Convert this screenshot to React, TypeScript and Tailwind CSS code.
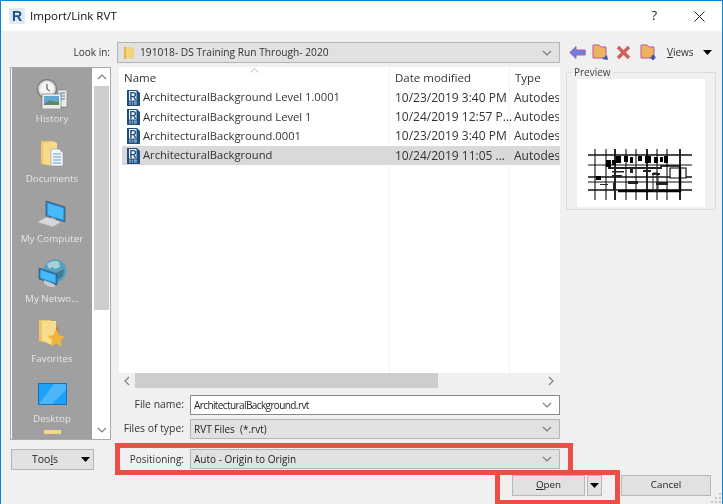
import React from "react";

function Chevron({ className = "" }: { className?: string }) {
  return (
    <svg width="10" height="6" viewBox="0 0 10 6" className={className}>
      <path d="M1 1l4 4 4-4" fill="none" stroke="#7c7c7c" strokeWidth="1.1" />
    </svg>
  );
}

function Caret() {
  return (
    <svg width="9" height="5" viewBox="0 0 9 5">
      <path d="M0 0h9L4.5 5z" fill="#000" />
    </svg>
  );
}

function Combo({ children, white, className = "" }: { children: React.ReactNode; white?: boolean; className?: string }) {
  return (
    <div
      className={`flex h-[20px] items-center justify-between border pl-[3px] pr-[7px] text-[10px] text-[#222] ${
        white ? "border-[#8a8a8a] bg-white" : "border-[#b4b4b4] bg-[#e1e1e1]"
      } ${className}`}
    >
      <span className="truncate">{children}</span>
      <Chevron />
    </div>
  );
}

function RvtIcon() {
  return (
    <svg width="15" height="16" viewBox="0 0 15 16" className="shrink-0">
      <path d="M1 0h10l3 3v13H1z" fill="#1d4f80" />
      <path d="M3 1h7.5v9.5H3z" fill="#f4f7fa" />
      <text x="3.6" y="9.6" fontSize="10" fontWeight="700" fill="#1d4f80" fontFamily="Liberation Sans, sans-serif">R</text>
      <path d="M3.2 12.2h1.6M5.8 12.2h1.4M8.2 12.2h2.6M3.2 14h1.6M5.8 14h1.4M8.2 14h2.6" stroke="#cfe0ef" strokeWidth="1" />
    </svg>
  );
}

function FileRow({ name, date, selected }: { name: string; date: string; selected?: boolean }) {
  return (
    <div className={`ml-[3px] flex h-[19.3px] items-center text-[12px] text-[#333] ${selected ? "bg-[#d9d9d9]" : ""}`}>
      <div className="flex w-[267px] items-center gap-[2px] pl-[4px]">
        <RvtIcon />
        <span className="whitespace-nowrap text-[11.2px]">{name}</span>
      </div>
      <div className="w-[120px] whitespace-nowrap pl-[6px]">{date}</div>
      <div className="w-[50px] overflow-hidden pl-[5px]">Autodes</div>
    </div>
  );
}

function HistoryIcon() {
  return (
    <svg width="32" height="30" viewBox="0 0 32 30">
      <circle cx="11" cy="10" r="9.5" fill="#d8dcd8" stroke="#77807f" strokeWidth="1.4" />
      <circle cx="11" cy="10" r="7" fill="#f4f4f0" />
      <path d="M11 5v5l3 2" stroke="#444" fill="none" />
      <path d="M22 11h9v17h-9z" fill="#e8ecee" stroke="#777" strokeWidth=".6" />
      <path d="M24 14h5M24 17h5M24 20h5" stroke="#3f79a8" />
      <path d="M6 15h19v15H6z" fill="#eceeee" stroke="#6a6a6a" strokeWidth=".6" />
      <path d="M8 17h15v8H8z" fill="#63a7d6" />
      <path d="M8 25l6-4 5 2 4-1v4H8z" fill="#5f8a60" />
    </svg>
  );
}

function DocsIcon() {
  return (
    <svg width="24" height="28" viewBox="0 0 24 28">
      <path d="M1 1h11v25l-11-2z" fill="#f0c564" />
      <path d="M12 1l5 2v6h-5z" fill="#f6dc8e" />
      <path d="M3 3l9-1v24l-9-3z" fill="#f7d987" />
      <path d="M11 9h8l4 4v13H11z" fill="#f4f6f7" stroke="#8d9aa4" strokeWidth=".6" />
      <path d="M13 14h8M13 17h8M13 20h8M13 23h8" stroke="#5f9fd0" />
    </svg>
  );
}

function ComputerIcon() {
  return (
    <svg width="30" height="28" viewBox="0 0 30 28">
      <path d="M9 1l19 6v15L9 16z" fill="#1f7fd0" stroke="#4c5a66" strokeWidth=".8" />
      <path d="M10.5 3l16 5v12l-16-5z" fill="#48baf7" />
      <path d="M14 17l5 2-1 3h-5z" fill="#b8bec2" />
      <path d="M0 22l10-5 14 5-8 5z" fill="#d5d9dc" stroke="#a4a9ad" strokeWidth=".5" />
    </svg>
  );
}

function NetworkIcon() {
  return (
    <svg width="29" height="29" viewBox="0 0 29 29">
      <circle cx="17" cy="12" r="11.5" fill="#5a9fbd" />
      <path d="M9 5c4-3 9-4 12-2l1 5-5 2-3-2-3 2z" fill="#a7d0dd" />
      <path d="M18 14l8-4-1 7-5 4z" fill="#3b7d9a" />
      <path d="M1 9l18 6v11L1 20z" fill="#1f7fd0" stroke="#44515c" strokeWidth=".7" />
      <path d="M2.5 11l15 5v8l-15-5z" fill="#48baf7" />
      <path d="M6 21l10 4 1 3-5 0-6-3z" fill="#c5cace" />
    </svg>
  );
}

function FavIcon() {
  return (
    <svg width="26" height="29" viewBox="0 0 26 29">
      <path d="M0 1h12v24L0 22z" fill="#eec465" />
      <path d="M3 2l14 0v18l-5 6-9-5z" fill="#f7dd90" />
      <path d="M17 8l2 0v12h-2z" fill="#d9773a" />
      <path d="M17 10l3 6.5 6 .5-4.5 4.5 1.5 6.5-6-3.5-5.5 3 1.5-6.5-4.5-4 6-1z" fill="#f2b437" />
    </svg>
  );
}

function DesktopIcon() {
  return (
    <svg width="29" height="22" viewBox="0 0 29 22">
      <path d="M0 0h29v22H0z" fill="#1273c4" />
      <path d="M1 1h27v20H1z" fill="#1ea0f8" />
      <path d="M1 21L16 1h12v6L14 21z" fill="#4cb6fa" />
    </svg>
  );
}

function SideItem({ icon, label }: { icon: React.ReactNode; label: string }) {
  return (
    <div className="flex h-[60px] shrink-0 flex-col items-center justify-end pb-[1px]">
      <div className="flex flex-1 items-center justify-center pt-[8px]">{icon}</div>
      <span className="whitespace-nowrap text-[9.8px] leading-[16px] text-[#e6e6e6]">{label}</span>
    </div>
  );
}

function Preview() {
  const vs = [7, 18, 27, 38, 48, 59, 69, 79, 92];
  const hs = [6, 16, 28, 33, 41];
  return (
    <svg width="106" height="52" viewBox="0 0 106 52">
      {vs.map((x, i) => (
        <path key={i} d={`M${x} 0V51`} stroke="#111" strokeWidth={i % 3 === 2 ? 1.8 : 1.1} />
      ))}
      {hs.map((y, i) => (
        <path key={i} d={`M0 ${y}H104`} stroke="#111" strokeWidth={i % 2 === 0 ? 1.5 : 1} />
      ))}
      <path d="M28 7h5v7h-5zM36 7h4v6h-4zM42 8h3v6h-3zM50 7h4v5h-4zM57 7h6v7h-6zM66 8h4v6h-4zM72 8h3v5h-3zM76 7h4v7h-4zM18 11h5v7h-5zM24 11h4v5h-4zM8 27h5v4H8z" fill="#000" />
      <path d="M20 18h54v2H20zM24 22h12v1.5H24zM24 26h10v2H24zM42 19h3v5h-3zM55 21h8v2h-8zM40 32h10v3H40zM64 24h8v2h-8zM25 34h3v8h-3zM68 33h12v3H68zM12 35h8v1H12z" fill="#222" />
      <path d="M82 19h16v10H82z" fill="#fff" stroke="#000" strokeWidth="1.1" />
      <path d="M72 17h20v10" fill="none" stroke="#000" strokeWidth="1.5" />
      <path d="M92 18v24H30" fill="none" stroke="#000" strokeWidth="2.4" />
      <path d="M65 24h5v18h-5z" fill="none" stroke="#222" />
    </svg>
  );
}

const sans = { fontFamily: '"Open Sans", "Noto Sans", sans-serif' };

export default function App() {
  return (
    <div
      style={sans}
      className="relative flex h-[504px] w-[723px] flex-col overflow-hidden border-x border-t border-[#0a84d6] bg-[#f0f0f0] blur-[0.35px]"
    >
      {/* title bar */}
      <div className="flex h-[30px] shrink-0 items-center bg-white pl-[8px] pr-[17px]">
        <div className="flex h-[16px] w-[16px] items-center justify-center bg-[#dfe9f2]">
          <span className="text-[14px] font-bold leading-none text-[#1d4f80]" style={{ fontFamily: '"Liberation Sans", sans-serif' }}>R</span>
        </div>
        <span className="ml-[5px] text-[11.6px] text-[#111]">Import/Link RVT</span>
        <span className="ml-auto text-[13px] text-[#222]">?</span>
        <svg width="11" height="11" viewBox="0 0 11 11" className="ml-[37px]">
          <path d="M.5.5l10 10M10.5.5l-10 10" stroke="#222" strokeWidth="1" />
        </svg>
      </div>

      {/* look in */}
      <div className="mt-[11px] flex h-[21px] shrink-0 items-center">
        <span className="w-[109px] whitespace-nowrap text-right text-[10px] text-[#333]">Look in:</span>
        <div className="ml-[7px] flex h-[21px] w-[443px] items-center justify-between border border-[#b4b4b4] bg-[#e1e1e1] pl-[6px] pr-[7px]">
          <div className="flex items-center gap-[6px] text-[10.2px] text-[#333]">
            <svg width="10" height="13" viewBox="0 0 10 13">
              <path d="M0 1h5l5 1v10l-10 1z" fill="#f5d27d" />
              <path d="M0 1h2v12H0z" fill="#e7b54b" />
            </svg>
            <span>191018- DS Training Run Through- 2020</span>
          </div>
          <Chevron />
        </div>
        <div className="ml-[9px] flex items-center">
          <svg width="17" height="13" viewBox="0 0 17 13">
            <path d="M7 .5L.8 6.5 7 12.5V9h9.2V4H7z" fill="#6c80d6" stroke="#b05ac8" strokeWidth="1" />
          </svg>
          <svg width="17" height="17" viewBox="0 0 17 17" className="ml-[6px]">
            <path d="M1 1h6l2 2h5v11H1z" fill="#eeb35f" stroke="#c0549a" strokeWidth="1" />
            <path d="M10 15l5-4 1 5z" fill="#4258b0" />
          </svg>
          <svg width="15" height="15" viewBox="0 0 15 15" className="ml-[7px]">
            <path d="M2 2l11 11M13 2L2 13" stroke="#d0605a" strokeWidth="3.4" />
          </svg>
          <svg width="17" height="17" viewBox="0 0 17 17" className="ml-[9px]">
            <path d="M1 1h6l2 2h5v11H1z" fill="#eeb35f" stroke="#c0549a" strokeWidth="1" />
            <path d="M13 11v5M10.5 13.5h5" stroke="#3a4fb0" strokeWidth="2" />
          </svg>
          <span className="ml-[10px] text-[10px] text-[#333]"><u>V</u>iews</span>
          <span className="ml-[9px] flex"><Caret /></span>
        </div>
      </div>

      {/* main area */}
      <div className="mt-[4px] flex min-h-0 flex-1">
        {/* places */}
        <div className="ml-[9px] w-[101px] shrink-0">
          <div className="flex h-[373px] border border-[#a9a9a9] bg-white pl-[1px]">
            <div className="flex w-[80px] flex-col overflow-hidden bg-[#a0a0a0]">
              <SideItem icon={<HistoryIcon />} label="History" />
              <SideItem icon={<DocsIcon />} label="Documents" />
              <SideItem icon={<ComputerIcon />} label="My Computer" />
              <SideItem icon={<NetworkIcon />} label="My Netwo..." />
              <SideItem icon={<FavIcon />} label="Favorites" />
              <SideItem icon={<DesktopIcon />} label="Desktop" />
              <div className="mx-auto mt-[2px] h-[4px] w-[17px] shrink-0 bg-[#f1d88c]" />
            </div>
            <div className="ml-[1px] flex w-[17px] flex-col items-center">
              <div className="flex h-[18px] shrink-0 items-center justify-center">
                <Chevron className="rotate-180" />
              </div>
              <div className="h-[224px] w-[15px] bg-[#cdcdcd]" />
              <div className="flex-1" />
              <div className="flex h-[18px] shrink-0 items-center justify-center">
                <Chevron />
              </div>
            </div>
          </div>
          <div className="ml-[1px] mt-[9px] flex h-[21px] w-[83px] items-center justify-between border border-[#b4b4b4] bg-[#e1e1e1] pl-[20px] pr-[3px] text-[10.5px] text-[#222]">
            <span>Too<u>l</u>s</span>
            <Caret />
          </div>
        </div>

        {/* center */}
        <div className="ml-[8px] w-[441px] shrink-0">
          <div className="relative h-[306px] bg-white">
            <div className="flex h-[21px] items-center text-[11.5px] text-[#333]">
              <div className="w-[271px] pl-[5px]">Name</div>
              <div className="w-[120px] pl-[5px]">Date modified</div>
              <div className="pl-[5px]">Type</div>
            </div>
            <svg width="9" height="5" viewBox="0 0 9 5" className="absolute left-[131px] top-[1px]">
              <path d="M.5 4.5l4-4 4 4" fill="none" stroke="#b8b8b8" />
            </svg>
            <div className="absolute bottom-0 left-[270px] top-0 w-px bg-[#eef5fb]" />
            <div className="absolute bottom-0 left-[390px] top-0 w-px bg-[#eef5fb]" />
            <div className="relative">
              <FileRow name="ArchitecturalBackground Level 1.0001" date="10/23/2019 3:40 PM" />
              <FileRow name="ArchitecturalBackground Level 1" date="10/24/2019 12:57 P..." />
              <FileRow name="ArchitecturalBackground.0001" date="10/23/2019 3:40 PM" />
              <FileRow name="ArchitecturalBackground" date="10/24/2019 11:05 ..." selected />
            </div>
          </div>
          <div className="flex h-[15px] items-center">
            <div className="flex w-[16px] justify-center"><Chevron className="rotate-90" /></div>
            <div className="h-[15px] w-[303px] bg-[#cdcdcd]" />
            <div className="flex-1" />
            <div className="flex w-[18px] justify-center"><Chevron className="-rotate-90" /></div>
          </div>
          <div className="mt-[7px] flex items-center">
            <span className="w-[66px] whitespace-nowrap pr-[1px] text-right text-[10.4px] text-[#333]">File name:</span>
            <Combo white className="ml-[5px] w-[370px]"><span className="tracking-[-0.6px]">ArchitecturalBackground.rvt</span></Combo>
          </div>
          <div className="mt-[4px] flex items-center">
            <span className="w-[66px] whitespace-nowrap pr-[1px] text-right text-[10.4px] text-[#333]">Files of type:</span>
            <Combo className="ml-[5px] w-[370px]">RVT Files&nbsp; (*.rvt)</Combo>
          </div>
          <div className="mt-[10px] flex items-center">
            <span className="w-[66px] whitespace-nowrap pr-[1px] text-right text-[10px] text-[#333]">Positioning:</span>
            <Combo className="ml-[5px] w-[370px]">Auto - Origin to Origin</Combo>
          </div>
        </div>

        {/* preview */}
        <div className="ml-[6px] w-[148px] shrink-0">
          <fieldset className="mt-[-2px] h-[145px] border border-[#dcdcdc] px-[10px] pb-[5px]">
            <legend className="ml-[-5px] px-[2px] text-[10px] leading-[14px] text-[#444]">Preview</legend>
            <div className="flex h-[128px] w-[128px] items-end justify-center bg-white pb-[6px]">
              <Preview />
            </div>
          </fieldset>
        </div>
      </div>

      {/* buttons */}
      <div className="absolute bottom-[8px] left-[511px] flex items-center text-[9.8px] text-[#222]">
        <div className="flex h-[21px] w-[73px] items-center justify-center border border-[#b8b8b8] bg-[#e1e1e1]"><span><u>O</u>pen</span></div>
        <div className="ml-[2px] flex h-[21px] w-[15px] items-center justify-center border border-[#b8b8b8] bg-[#e1e1e1]"><Caret /></div>
        <div className="ml-[19px] flex h-[21px] w-[90px] items-center justify-center border border-[#b8b8b8] bg-[#e1e1e1]">Cancel</div>
      </div>

      {/* annotation rectangles */}
      <div className="pointer-events-none absolute left-[114px] top-[442px] h-[32px] w-[458px] border-[5px] border-[#ee4c47]" />
      <div className="pointer-events-none absolute left-[494px] top-[469px] h-[35px] w-[125px] border-[5px] border-[#ee4c47]" />

      {/* resize grip */}
      <svg width="11" height="11" viewBox="0 0 11 11" className="absolute bottom-[1px] right-[0px]">
        <path d="M8 1h2v2H8zM4 5h2v2H4zM8 5h2v2H8zM0 9h2v2H0zM4 9h2v2H4zM8 9h2v2H8z" fill="#c6c6c6" />
      </svg>
    </div>
  );
}
